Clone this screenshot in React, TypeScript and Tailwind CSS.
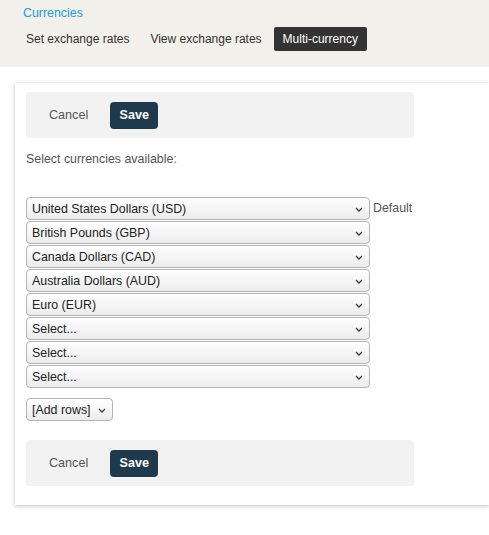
import React from 'react';

const currencies = [
  'United States Dollars (USD)',
  'British Pounds (GBP)',
  'Canada Dollars (CAD)',
  'Australia Dollars (AUD)',
  'Euro (EUR)',
  'Select...',
  'Select...',
  'Select...',
];

function Chevron() {
  return (
    <svg width="8" height="5" viewBox="0 0 8 5" className="shrink-0">
      <path d="M1 1 L4 4 L7 1" fill="none" stroke="#444" strokeWidth="1.4" />
    </svg>
  );
}

function FakeSelect({ label, width }: { label: string; width: string }) {
  return (
    <div
      className={`${width} h-[23px] flex items-center justify-between pl-[5px] pr-[6px] pt-[1px] border border-[#b4b4b4] rounded-[4px] bg-gradient-to-b from-white to-[#ececec] text-[12.4px] text-[#222]`}
    >
      <span>{label}</span>
      <Chevron />
    </div>
  );
}

function ActionBar() {
  return (
    <div className="w-[388px] h-[46px] bg-[#f2f2f2] rounded-[3px] flex items-center">
      <button className="ml-[23px] text-[12.6px] text-[#555]">Cancel</button>
      <button className="ml-[22px] h-[27px] w-[48px] rounded-[4px] bg-[#1f3a4d] text-white text-[12.6px] font-bold">
        Save
      </button>
    </div>
  );
}

export default function App() {
  return (
    <div className="w-[489px] h-[535px] bg-white overflow-hidden" style={{ fontFamily: '"Liberation Sans", Arial, sans-serif' }}>
      <div className="h-[67px] bg-[#f2f0eb] pl-[23px] pt-[4px]">
        <div className="text-[12.4px] text-[#1f9ad6] leading-[18px]">Currencies</div>
        <div className="flex items-center mt-[5px] -ml-[6px] gap-[3px] text-[12px]">
          <span className="px-[9px] h-[24px] flex items-center text-[#333]">Set exchange rates</span>
          <span className="px-[9px] h-[24px] flex items-center text-[#333]">View exchange rates</span>
          <span className="px-[9px] h-[24px] flex items-center text-white bg-[#333] rounded-[2px]">Multi-currency</span>
        </div>
      </div>

      <div className="ml-[15px] mt-[16px] h-[422px] bg-white shadow-[0_1px_4px_rgba(0,0,0,0.25)] pl-[11px] pt-[9px]">
        <ActionBar />
        <div className="mt-[13px] text-[12.4px] text-[#555] leading-[16px]">Select currencies available:</div>
        <div className="mt-[30px] flex flex-col gap-[1px]">
          {currencies.map((c, i) => (
            <div key={i} className="flex items-center">
              <FakeSelect label={c} width="w-[344px]" />
              {i === 0 && <span className="ml-[3px] text-[12.4px] text-[#555]">Default</span>}
            </div>
          ))}
        </div>
        <div className="mt-[10px]">
          <FakeSelect label="[Add rows]" width="w-[87px]" />
        </div>
        <div className="mt-[19px]">
          <ActionBar />
        </div>
      </div>
    </div>
  );
}
